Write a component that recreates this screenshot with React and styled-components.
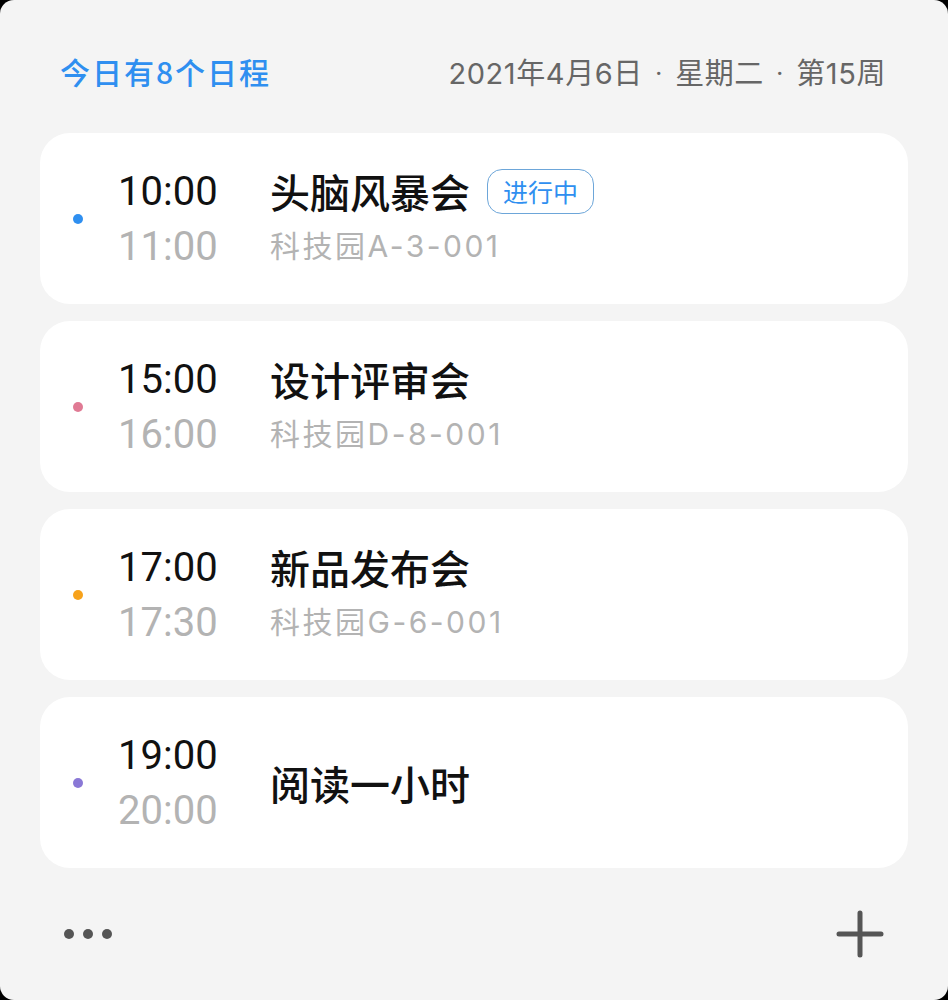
import React from "react";
import styled, { createGlobalStyle } from "styled-components";

const Global = createGlobalStyle`
  html, body { margin: 0; padding: 0; background: #000; }
  #root { width: 948px; height: 1000px; }
`;

const Widget = styled.div`
  width: 948px;
  height: 1000px;
  box-sizing: border-box;
  background: #f4f4f4;
  border-radius: 14px;
  overflow: hidden;
  display: flex;
  flex-direction: column;
  font-family: "Noto Sans CJK SC", Roboto, sans-serif;
`;

const Header = styled.div`
  display: flex;
  justify-content: space-between;
  align-items: center;
  height: 40px;
  padding: 51px 62px 0 60px;
`;

const Summary = styled.div`
  color: #2f8ff0;
  font-size: 30px;
  font-weight: 500;
  letter-spacing: 2px;
`;

const DateText = styled.div`
  color: #666;
  font-size: 29px;
  font-family: Inter, "Noto Sans CJK SC", sans-serif;
  letter-spacing: 0.6px;
`;

const Sep = styled.span`
  font-family: Roboto, sans-serif;
  margin: 0 12px;
`;

const List = styled.div`
  display: flex;
  flex-direction: column;
  gap: 17px;
  padding: 42px 40px 0 40px;
`;

const Card = styled.div`
  height: 171px;
  background: #fff;
  border-radius: 30px;
  display: flex;
  align-items: center;
  padding-left: 33px;
`;

const Dot = styled.span`
  width: 10px;
  height: 10px;
  border-radius: 50%;
  background: ${(p) => p.$color};
  flex: none;
`;

const TimeCol = styled.div`
  width: 152px;
  margin-left: 35px;
  display: flex;
  flex-direction: column;
  font-family: Roboto, "Noto Sans CJK SC", sans-serif;
  font-size: 40px;
  line-height: 55px;
`;

const Start = styled.span`
  color: #111;
`;

const End = styled.span`
  color: #b3b3b3;
`;

const InfoCol = styled.div`
  display: flex;
  flex-direction: column;
`;

const TitleRow = styled.div`
  display: flex;
  align-items: center;
  height: 55px;
`;

const Title = styled.span`
  font-size: 40px;
  font-weight: 500;
  color: #111;
`;

const Badge = styled.span`
  margin-left: 17px;
  height: 45px;
  padding: 0 15px;
  box-sizing: border-box;
  border: 1.5px solid #6da6d9;
  border-radius: 15px;
  color: #2f8ff0;
  font-size: 25px;
  display: flex;
  align-items: center;
`;

const Location = styled.span`
  font-size: 30px;
  line-height: 55px;
  color: #b3b3b3;
  font-family: Inter, "Noto Sans CJK SC", sans-serif;
  letter-spacing: 2.5px;
`;

const Footer = styled.div`
  flex: 1;
  display: flex;
  justify-content: space-between;
  align-items: center;
  padding: 0 64px 0 64px;
`;

const Dots = styled.div`
  display: flex;
  gap: 9px;
`;

const SmallDot = styled.span`
  width: 10px;
  height: 10px;
  border-radius: 50%;
  background: #555;
`;

const events = [
  { color: "#2f8ff0", start: "10:00", end: "11:00", title: "头脑风暴会", loc: "科技园A-3-001", live: true },
  { color: "#e07a94", start: "15:00", end: "16:00", title: "设计评审会", loc: "科技园D-8-001" },
  { color: "#f7a21b", start: "17:00", end: "17:30", title: "新品发布会", loc: "科技园G-6-001" },
  { color: "#8a78d6", start: "19:00", end: "20:00", title: "阅读一小时" },
];

export default function App() {
  return (
    <>
      <Global />
      <Widget>
        <Header>
          <Summary>今日有8个日程</Summary>
          <DateText>
            2021年4月6日<Sep>·</Sep>星期二<Sep>·</Sep>第15周
          </DateText>
        </Header>
        <List>
          {events.map((e) => (
            <Card key={e.start}>
              <Dot $color={e.color} />
              <TimeCol>
                <Start>{e.start}</Start>
                <End>{e.end}</End>
              </TimeCol>
              <InfoCol>
                <TitleRow>
                  <Title>{e.title}</Title>
                  {e.live && <Badge>进行中</Badge>}
                </TitleRow>
                {e.loc && <Location>{e.loc}</Location>}
              </InfoCol>
            </Card>
          ))}
        </List>
        <Footer>
          <Dots>
            <SmallDot />
            <SmallDot />
            <SmallDot />
          </Dots>
          <svg width="48" height="48" viewBox="0 0 48 48">
            <path d="M24 3v42M3 24h42" stroke="#555" strokeWidth="5" strokeLinecap="round" />
          </svg>
        </Footer>
      </Widget>
    </>
  );
}
